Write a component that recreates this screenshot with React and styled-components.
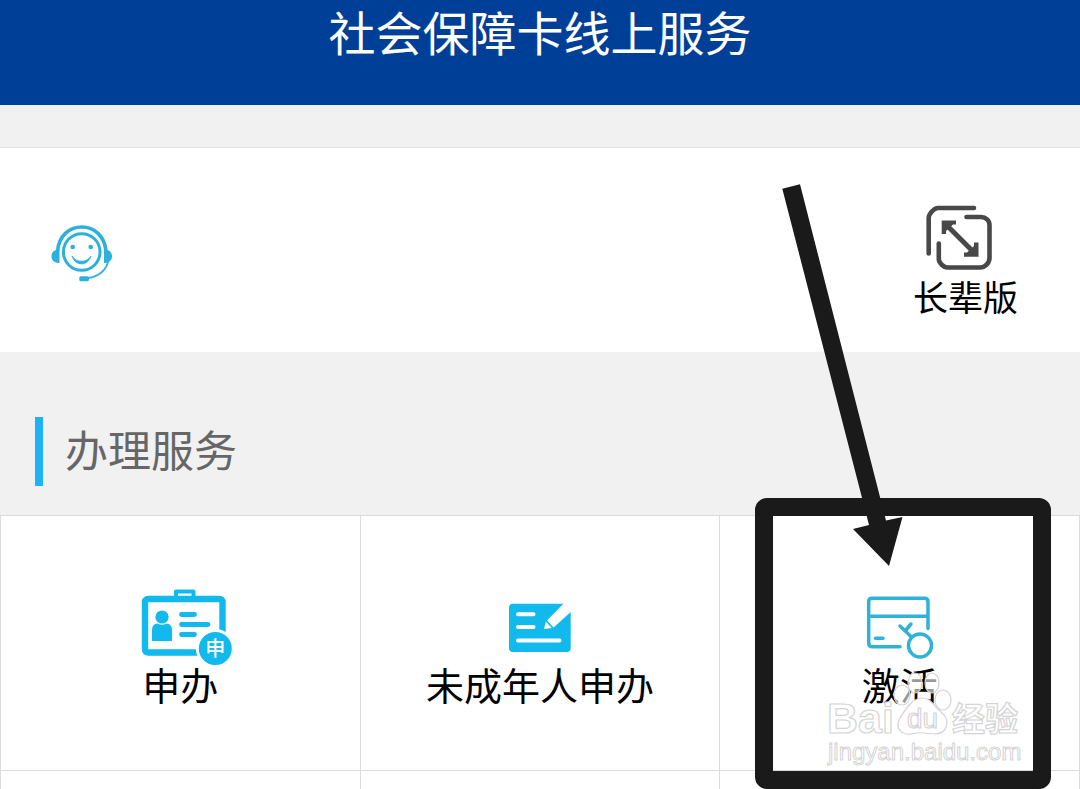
import React from "react";
import styled, { createGlobalStyle } from "styled-components";

const GlobalStyle = createGlobalStyle`
  * { box-sizing: border-box; }
  body {
    margin: 0;
    background: #f1f1f1;
    font-family: "Noto Sans CJK SC", "Noto Sans", sans-serif;
  }
  button {
    border: 0;
    padding: 0;
    background: none;
    color: inherit;
    font: inherit;
    cursor: pointer;
  }
`;

const Page = styled.div`
  display: flex;
  flex-direction: column;
  min-height: 100vh;
  overflow: hidden;
`;

const Header = styled.header`
  padding: 0 16px 43px;
  background: #003f98;
  color: #fff;
  text-align: center;
`;

const Title = styled.h1`
  margin: 0;
  font-size: 47px;
  line-height: 62px;
  font-weight: 400;
`;

const ToolCard = styled.section`
  display: flex;
  align-items: flex-start;
  justify-content: space-between;
  margin-top: 42px;
  padding: 56px 62px 36px 50px;
  border-top: 1px solid #e2e2e2;
  background: #fff;
`;

const SupportButton = styled.button`
  padding: 19px 0;
  svg { display: block; }
`;

const ElderButton = styled.button`
  display: flex;
  flex-direction: column;
  align-items: center;
  gap: 4px;
  color: #000;
  font-size: 35px;
  line-height: 40px;
`;

const SectionHeading = styled.h2`
  margin: 65px 35px 29px;
  padding: 0 0 7px 22px;
  border-left: 8px solid #20b2f6;
  color: #666;
  font-size: 43px;
  line-height: 62px;
  font-weight: 400;
`;

const Grid = styled.ul`
  display: grid;
  grid-template-columns: repeat(3, 1fr);
  grid-template-rows: auto 1fr;
  flex: 1;
  margin: 0;
  padding: 0;
  border: 1px solid #dcdcdc;
  border-width: 1px 0 0 1px;
  background: #fff;
  list-style: none;
`;

const Cell = styled.li`
  position: relative;
  min-height: 18px;
  border: 1px solid #dcdcdc;
  border-width: 0 1px 1px 0;
  border-bottom-width: ${(p) => (p.$open ? 0 : 1)}px;
`;

const Tile = styled.button`
  display: flex;
  flex-direction: column;
  align-items: center;
  width: 100%;
  padding: 68px 0 66px;
  color: #000;
  font-size: 38px;
  line-height: 40px;
  svg { overflow: visible; }
`;

const Pointer = styled.svg`
  position: absolute;
  z-index: 2;
  top: -336px;
  left: calc(50% - 150px);
  pointer-events: none;
`;

const Watermark = styled.svg`
  position: absolute;
  z-index: 1;
  top: 155px;
  left: calc(50% - 75px);
  pointer-events: none;
`;

function HeadsetIcon() {
  return (
    <svg width="64" height="60" viewBox="0 0 64 60" fill="none" stroke="#2bb1dc" aria-hidden="true">
      <circle cx="31.7" cy="29" r="18.3" strokeWidth="3" />
      <path d="M7.5 28C9 13 19 4 31.7 4S54.5 13 56 28" strokeWidth="3.6" />
      <path d="M9.5 26.5V40C4.5 40 1.5 37.5 1.5 33.2S4.5 26.5 9.5 26.5ZM54 26.5V40C59 40 62 37.5 62 33.2S59 26.5 54 26.5Z" fill="#2bb1dc" stroke="none" />
      <circle cx="22.7" cy="24" r="2.3" fill="#2bb1dc" stroke="none" />
      <circle cx="40.7" cy="24" r="2.3" fill="#2bb1dc" stroke="none" />
      <path d="M22 33C25 43.5 38 43.5 41 33C37 40 26 40 22 33Z" fill="#2bb1dc" strokeWidth=".8" />
      <path d="M58 39C56 47 49 53.5 38 55" strokeWidth="1.8" />
      <rect x="29.3" y="53.3" width="9.6" height="5" rx="1.5" fill="#2bb1dc" stroke="none" />
    </svg>
  );
}

function ExpandIcon() {
  return (
    <svg width="80" height="68" viewBox="0 0 80 68" fill="none" stroke="#484848" strokeWidth="4.6" strokeLinecap="round" strokeLinejoin="round" aria-hidden="true">
      <path d="M3.7 49.5V14C3.7 10 9 4 13 4H49" />
      <path d="M41.5 13H56C61 13 64.5 16.5 64.5 21V54C64.5 59 60 63.5 55 63.5H22C19 63.5 13.8 59 13.8 55V39.5" />
      <path d="M23 22.5L47 46.5" strokeWidth="5" strokeLinecap="butt" />
      <path d="M16.7 16.5H31V20.5H28L21 27V30H16.7ZM53.5 38.5V52.7H39V48.5H42L49 42V38.5Z" fill="#484848" stroke="none" />
    </svg>
  );
}

function ApplyIcon() {
  return (
    <svg width="100" height="80" viewBox="0 0 100 80" fill="none" stroke="#12b9ed" aria-hidden="true">
      <rect x="15" y="15" width="77.5" height="53.5" rx="3" strokeWidth="6.4" />
      <path d="M46 13V7.5H63.5V13" strokeWidth="4" strokeLinejoin="round" />
      <circle cx="32" cy="33" r="6.6" fill="#12b9ed" stroke="none" />
      <path d="M22 57V46Q22 40 27.5 39.5Q32 42 36.5 39.5Q42 40 42 46V57Z" fill="#12b9ed" stroke="none" />
      <path d="M51.5 30.5H64.5M51.5 40.5H78M51.5 50.5H64.5" strokeWidth="4.8" strokeLinecap="round" />
      <circle cx="85.3" cy="64.5" r="18" fill="#12b9ed" stroke="#fff" strokeWidth="3" />
      <text x="85.3" y="72" textAnchor="middle" fontSize="20" fontWeight="500" fill="#fff" stroke="none">申</text>
    </svg>
  );
}

function MinorIcon() {
  return (
    <svg width="100" height="80" viewBox="0 0 100 80" fill="none" aria-hidden="true">
      <rect x="19" y="19.7" width="61.7" height="48.3" rx="4" fill="#12b9ed" />
      <path d="M28 30.3H43.5M28 43H43.5M28 56.5H69.5" stroke="#fff" strokeWidth="4" strokeLinecap="round" />
      <path d="M57 36.5L75 18H83V26L63.5 43.5ZM55.8 37.7L61.8 44L54 45Z" fill="#fff" />
    </svg>
  );
}

function ActivateIcon() {
  return (
    <svg width="100" height="80" viewBox="0 0 100 80" fill="none" stroke="#30b1d8" strokeWidth="3.5" strokeLinecap="round" aria-hidden="true">
      <path d="M50 62.7H22Q18.7 62.7 18.7 59V18Q18.7 14.3 22 14.3H74.5Q78 14.3 78 18V44.5M19 32.3H78" />
      <path d="M25.5 54.3H33" />
      <circle cx="70" cy="61.5" r="11.5" />
      <path d="M61.5 53L50 42M55.5 46.5L61 40" />
    </svg>
  );
}

const services = [
  { label: "申办", Icon: ApplyIcon },
  { label: "未成年人申办", Icon: MinorIcon },
  { label: "激活", Icon: ActivateIcon, highlighted: true },
];

function HighlightPointer() {
  return (
    <Pointer width="305" height="609" viewBox="0 0 305 609" fill="#1a1a1a" aria-hidden="true">
      <rect x="14" y="327" width="278" height="273" rx="3" fill="none" stroke="#1a1a1a" strokeWidth="18" strokeLinejoin="round" />
      <path d="M32.3 8.7L50 4.3L136 340.5L152.5 337L139 386L103 349L119 345Z" />
    </Pointer>
  );
}

function BaiduWatermark() {
  return (
    <Watermark width="210" height="105" viewBox="0 0 210 105" fill="#fff" stroke="#d4d4d4" strokeWidth="1.2" fontFamily='"Liberation Sans", sans-serif' aria-hidden="true">
      <g fillOpacity=".6">
        <ellipse cx="77" cy="24" rx="8" ry="10" />
        <ellipse cx="90" cy="12" rx="7" ry="10" />
        <ellipse cx="107" cy="12" rx="7" ry="10" />
        <ellipse cx="118" cy="29" rx="8" ry="10" />
      </g>
      <path d="M97 27C107 27 109 36 116 41C126 49 123 63 109 63C101 63 98 61 92 62C77 66 69 58 75 47C80 39 87 27 97 27Z" />
      <text x="2" y="62" fontSize="43" fontWeight="700">Bai</text>
      <text x="82" y="57" fontSize="28">du</text>
      <text x="127" y="60" fontSize="33" fontWeight="700" fontFamily='"Noto Sans CJK SC", sans-serif'>经验</text>
      <text x="3" y="89" fontSize="24" strokeWidth="1">jingyan.baidu.com</text>
    </Watermark>
  );
}

export default function App() {
  return (
    <Page>
      <GlobalStyle />
      <Header>
        <Title>社会保障卡线上服务</Title>
      </Header>
      <ToolCard>
        <SupportButton type="button" aria-label="客服">
          <HeadsetIcon />
        </SupportButton>
        <ElderButton type="button">
          <ExpandIcon />
          长辈版
        </ElderButton>
      </ToolCard>
      <SectionHeading>办理服务</SectionHeading>
      <Grid>
        {services.map(({ label, Icon, highlighted }) => (
          <Cell key={label}>
            <Tile type="button">
              <Icon />
              {label}
            </Tile>
            {highlighted && <BaiduWatermark />}
            {highlighted && <HighlightPointer />}
          </Cell>
        ))}
        <Cell $open />
        <Cell $open />
        <Cell $open />
      </Grid>
    </Page>
  );
}
